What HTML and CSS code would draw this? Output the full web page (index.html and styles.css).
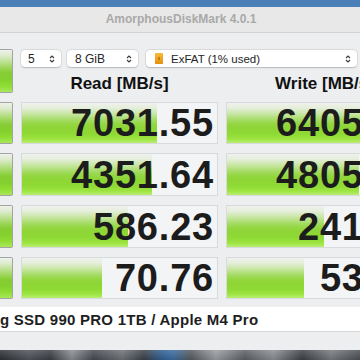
FILE: index.html
```
<!DOCTYPE html>
<html>
<head>
<meta charset="utf-8">
<link rel="stylesheet" href="styles.css">
</head>
<body>
<div class="window">
  <div class="topbar"></div>
  <div class="titlebar">AmorphousDiskMark 4.0.1</div>
  <div class="main">
    <div class="board">
      <div class="btn btn-all"></div>
      <div class="top">
        <div class="controls">
          <div class="select s1"><span>5</span><svg class="chev" viewBox="0 0 6 10"><path d="M1 4 L3 2 L5 4 M1 6 L3 8 L5 6"/></svg></div>
          <div class="select s2"><span>8 GiB</span><svg class="chev" viewBox="0 0 6 10"><path d="M1 4 L3 2 L5 4 M1 6 L3 8 L5 6"/></svg></div>
          <div class="select s3"><span class="drive"><svg viewBox="0 0 8 11"><defs><linearGradient id="dg" x1="0" y1="0" x2="0" y2="1"><stop offset="0" stop-color="#f8bc3a"/><stop offset="1" stop-color="#e4900e"/></linearGradient></defs><rect x="0" y="0" width="8" height="11" rx="0.8" fill="url(#dg)"/><rect x="3.4" y="4" width="1.2" height="3" fill="#a86008"/></svg>ExFAT (1% used)</span><svg class="chev" viewBox="0 0 6 10"><path d="M1 4 L3 2 L5 4 M1 6 L3 8 L5 6"/></svg></div>
        </div>
        <div class="heads">
          <div class="head">Read [MB/s]</div>
          <div class="head">Write [MB/s]</div>
        </div>
      </div>

      <div class="btn"></div>
      <div class="cell"><div class="bar" style="width:69%"></div><span class="num">7031.55</span></div>
      <div class="cell"><div class="bar" style="width:70%"></div><span class="num">6405.68</span></div>

      <div class="btn"></div>
      <div class="cell"><div class="bar" style="width:66.5%"></div><span class="num">4351.64</span></div>
      <div class="cell"><div class="bar" style="width:67.5%"></div><span class="num">4805.12</span></div>

      <div class="btn"></div>
      <div class="cell"><div class="bar" style="width:54.3%"></div><span class="num">586.23</span></div>
      <div class="cell"><div class="bar" style="width:49.5%"></div><span class="num">241.87</span></div>

      <div class="btn"></div>
      <div class="cell"><div class="bar" style="width:41%"></div><span class="num">70.76</span></div>
      <div class="cell"><div class="bar" style="width:39.5%"></div><span class="num">53.41</span></div>
    </div>
    <div class="field">g SSD 990 PRO 1TB / Apple M4 Pro</div>
  </div>
  <div class="wallpaper"></div>
</div>
</body>
</html>
```
FILE: styles.css
```
html, body {
  margin: 0;
  padding: 0;
}
body {
  width: 360px;
  height: 360px;
  overflow: hidden;
  font-family: "Liberation Sans", Arial, sans-serif;
  background: #eceef0;
}
.window {
  width: 360px;
  height: 360px;
  overflow: hidden;
  display: flex;
  flex-direction: column;
}
.topbar {
  height: 7px;
  background: #4a7fb7;
  flex: none;
}
.titlebar {
  height: 25px;
  flex: none;
  background: #e8e8e8;
  border-bottom: 1px solid #d2d2d2;
  color: #a9a9a9;
  font-weight: bold;
  font-size: 12px;
  line-height: 25px;
  text-align: center;
  padding-left: 2px;
}
.main {
  flex: none;
  padding-top: 16px;
  background: #eceef0;
}
.board {
  display: grid;
  grid-template-columns: 13px 197px 197px;
  grid-template-rows: 44px 42px 43px 43px 42px;
  column-gap: 8px;
  row-gap: 9px;
  width: 423px;
}
.btn {
  box-sizing: border-box;
  border: 1px solid #a3a3a3;
  border-left: none;
  border-radius: 0 2px 2px 0;
  background: linear-gradient(to bottom,
    #eef2ea 0%, #dcebcb 14%, #b8e08a 30%, #97d450 45%,
    #86cc34 55%, #84d02e 70%, #8edc32 85%, #a8e85a 100%);
}
.top {
  grid-column: 2 / 4;
  display: flex;
  flex-direction: column;
}
.controls {
  display: flex;
  margin-top: 1px;
  height: 17px;
}
.select {
  box-sizing: border-box;
  height: 17px;
  background: #fff;
  border-radius: 4px;
  box-shadow: 0 0 0 0.5px rgba(0,0,0,0.10), 0 0.5px 1.5px rgba(0,0,0,0.18);
  display: flex;
  align-items: center;
  justify-content: space-between;
  font-size: 12px;
  color: #262626;
  padding-right: 6px;
}
.s1 { width: 40px; padding-left: 7px; }
.s2 { width: 71px; margin-left: 6px; padding-left: 8px; }
.s3 { width: 211px; margin-left: 8px; padding-left: 9px; font-size: 11.5px; }
.drive {
  display: flex;
  align-items: center;
  gap: 8px;
}
.drive svg {
  width: 8px;
  height: 11px;
}
.chev {
  width: 6px;
  height: 10px;
  fill: none;
  stroke: #3a3a3a;
  stroke-width: 1.1;
}
.heads {
  display: grid;
  grid-template-columns: 197px 197px;
  column-gap: 8px;
  margin-top: 7px;
}
.head {
  text-align: center;
  font-weight: bold;
  font-size: 17px;
  line-height: 19px;
  color: #111;
}
.cell {
  position: relative;
  box-sizing: border-box;
  border: 1px solid #d9dadd;
  background: #f3f4f6;
  display: flex;
  align-items: center;
  justify-content: flex-end;
  padding-right: 3px;
  overflow: hidden;
}
.bar {
  position: absolute;
  left: 0;
  top: 0;
  bottom: 0;
  background: linear-gradient(to bottom,
    #eff1ec 0%, #e6eedd 12%, #c6e6a0 28%, #a6dc66 42%,
    #95d744 52%, #8ed536 62%, #8fda34 78%, #9de440 90%, #b9ee72 100%);
}
.num {
  position: relative;
  font-weight: bold;
  font-size: 38px;
  letter-spacing: 0.8px;
  color: #1c1c1c;
  line-height: 1;
}
.field {
  margin-top: 8px;
  height: 25px;
  box-sizing: border-box;
  background: #fff;
  border-bottom: 1px solid #d6d7da;
  font-weight: bold;
  font-size: 15px;
  letter-spacing: 0.25px;
  line-height: 25px;
  color: #1e1e1e;
  white-space: nowrap;
  padding-left: 0;
}
.wallpaper {
  margin-top: 18px;
  height: 10px;
  flex: none;
  background:
    linear-gradient(to bottom, rgba(255,255,255,0.15), rgba(0,0,0,0.1)),
    linear-gradient(to right,
      #2c2f34 0%, #50545a 8%, #3a3d42 14%, #8a8d92 20%, #45494f 26%,
      #6d7176 34%, #3b4046 40%, #2f5f94 45%, #3a6aa0 48%, #55595e 53%,
      #9a9da1 60%, #5b5f64 68%, #8c8f93 76%, #3c3f44 84%, #777a7e 92%, #4a4d52 100%);
}
```
